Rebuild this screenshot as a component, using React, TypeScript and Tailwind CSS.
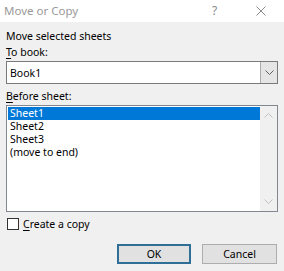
import React from "react";

const Chevron = ({ dir, color }: { dir: "up" | "down"; color: string }) => (
  <svg width="9" height="6" viewBox="0 0 9 6">
    {dir === "down" ? (
      <polyline points="0.5,0.5 4.5,4.5 8.5,0.5" fill="none" stroke={color} strokeWidth="1" />
    ) : (
      <polyline points="0.5,5.5 4.5,1.5 8.5,5.5" fill="none" stroke={color} strokeWidth="1" />
    )}
  </svg>
);

export default function App() {
  return (
    <div
      className="w-[284px] h-[271px] bg-[#f0f0f0] text-[10.5px] text-black overflow-hidden"
      style={{ fontFamily: '"Noto Sans", "Open Sans", sans-serif' }}
    >
      <div className="h-[22px] bg-white flex items-center relative">
        <span className="pl-[4px] text-[#999999] text-[11.5px] leading-[16px]">Move or Copy</span>
        <span className="absolute left-[212px] top-[3px] text-[#8a8a8a] text-[12px] leading-[16px]">?</span>
        <svg className="absolute left-[256px] top-[6px]" width="10" height="10" viewBox="0 0 10 10">
          <path d="M0.5 0.5 L9.5 9.5 M9.5 0.5 L0.5 9.5" stroke="#8a8a8a" strokeWidth="1" />
        </svg>
      </div>
      <div className="px-[6px] pr-[6px] flex flex-col">
        <div className="mt-[6px] leading-[16px]">Move selected sheets</div>
        <div className="leading-[16px]">
          <u className="underline-offset-2">T</u>o book:
        </div>
        <div className="mt-[1px] h-[23px] w-[272px] bg-white border border-[#7a7a7a] flex">
          <div className="flex-1 pl-[3px] flex items-center leading-[16px]">Book1</div>
          <div className="w-[17px] h-full bg-[#e5e5e5] border-l border-[#acacac] flex items-center justify-center">
            <Chevron dir="down" color="#606060" />
          </div>
        </div>
        <div className="mt-[4px] leading-[16px]">
          <u className="underline-offset-2">B</u>efore sheet:
        </div>
        <div className="mt-[1px] h-[107px] w-[272px] bg-white border border-[#828790] flex">
          <div className="flex-1 pt-[1px] pl-[1px] flex flex-col">
            <div className="h-[13px] leading-[13px] bg-[#0078d7] text-white pl-[2px]">Sheet1</div>
            <div className="h-[13px] leading-[13px] pl-[2px]">Sheet2</div>
            <div className="h-[13px] leading-[13px] pl-[2px]">Sheet3</div>
            <div className="h-[13px] leading-[13px] pl-[2px]">(move to end)</div>
          </div>
          <div className="w-[17px] h-full bg-[#f0f0f0] flex flex-col items-center justify-between py-[6px]">
            <Chevron dir="up" color="#c0c0c0" />
            <Chevron dir="down" color="#c0c0c0" />
          </div>
        </div>
        <div className="mt-[5px] flex items-center h-[14px]">
          <div className="w-[12px] h-[12px] border border-[#333333] bg-white ml-[1px]" />
          <span className="ml-[4px] leading-[16px]">
            <u className="underline-offset-2">C</u>reate a copy
          </span>
        </div>
        <div className="mt-[13px] flex justify-end gap-[11px] pr-[1px]">
          <button className="w-[74px] h-[20px] bg-[#e1e1e1] border-2 border-[#2f6f97] flex items-center justify-center leading-[16px]">
            OK
          </button>
          <button className="w-[75px] h-[20px] bg-[#e1e1e1] border border-[#adadad] flex items-center justify-center leading-[16px]">
            Cancel
          </button>
        </div>
      </div>
    </div>
  );
}
